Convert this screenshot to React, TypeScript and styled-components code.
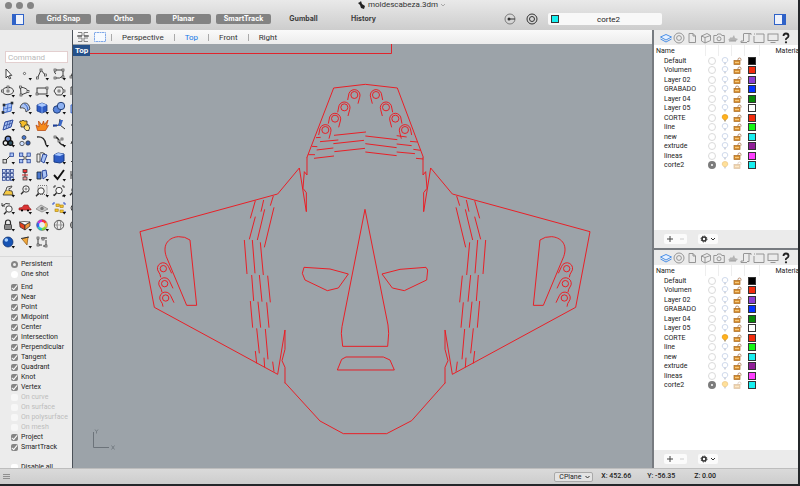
import React from "react";
import styled, { createGlobalStyle } from "styled-components";

const GlobalStyle = createGlobalStyle`
  * { box-sizing: border-box; }
  body { margin: 0; background: #24272a; font-family: Roboto, "Liberation Sans", sans-serif; color: #222; }
  button, input, select { font: inherit; color: inherit; margin: 0; padding: 0; border: 0; }
`;

const Window = styled.div`
  height: 100vh;
  padding: 0 2px 2px 0;
  display: flex;
  flex-direction: column;
  font-size: 7px;
  line-height: 9px;
`;

const Header = styled.header`
  background: linear-gradient(#e9e9e9, #cdcdcd);
  flex: none;
`;

const TitleBar = styled.div`
  display: grid;
  grid-template-columns: 1fr auto 1fr;
  align-items: center;
  height: 10px;
  padding-left: 5px;
`;

const Lights = styled.div`
  display: flex;
  gap: 4px;
`;

const Light = styled.button`
  width: 7px;
  height: 7px;
  border-radius: 50%;
  background: #858585;
`;

const Title = styled.h1`
  margin: 0;
  display: flex;
  align-items: center;
  gap: 3px;
  font-size: 8px;
  line-height: 10px;
  font-weight: 400;
  color: #333;
`;

const Toolbar = styled.div`
  display: flex;
  justify-content: space-between;
  align-items: center;
  height: 20px;
  padding: 0 12px 2px;
`;

const ToolGroup = styled.div`
  display: flex;
  align-items: center;
  gap: 5px;
`;

const SideToggle = styled.button<{ $side: "left" | "right" }>`
  width: 12px;
  height: 11px;
  margin-right: ${(p) => (p.$side === "left" ? 7 : 0)}px;
  border: 1px solid #2f62c8;
  border-${(p) => p.$side}-width: 4px;
  background: #eef2fb;
`;

const Pill = styled.button<{ $on?: boolean }>`
  width: 55px;
  height: 10px;
  border-radius: 2px;
  font-family: Inter, sans-serif;
  font-weight: 700;
  line-height: 10px;
  background: ${(p) => (p.$on ? "#838383" : "transparent")};
  color: ${(p) => (p.$on ? "#fff" : "#3c3c3c")};
`;

const IconButton = styled.button`
  display: grid;
  place-items: center;
  background: none;
  min-width: 0;
`;

const CurrentLayer = styled.button`
  display: grid;
  grid-template-columns: 8px 1fr;
  align-items: center;
  width: 114px;
  height: 12px;
  padding: 0 3px;
  border-radius: 2px;
  background: #f8f8f8;
  font-size: 8px;
`;

const Main = styled.div`
  flex: 1;
  min-height: 0;
  display: grid;
  grid-template-columns: 72px minmax(0, 1fr) 146px;
`;

const Sidebar = styled.aside`
  display: flex;
  flex-direction: column;
  overflow: hidden;
  background: #ececec;
`;

const CommandArea = styled.div`
  padding: 7px 4px 3px 5px;
  margin-top: 14px;
`;

const CommandInput = styled.input`
  display: block;
  width: 100%;
  height: 12px;
  padding: 0 2px;
  border: 1px solid #e3cfcf;
  background: #fff;
  font-size: 8px;
  &::placeholder { color: #b9b9b9; opacity: 1; }
`;

const Palette = styled.div`
  display: grid;
  flex: none;
  grid-template-columns: repeat(5, 1fr);
  grid-template-rows: repeat(11, 1fr);
  width: 84px;
  height: 184px;
  margin-bottom: 6px;
`;

const Snaps = styled.fieldset`
  margin: 0;
  min-width: 0;
  padding: 2px 0 0 11px;
  border: 0;
  border-top: 1px solid #d9d9d9;
`;

const SnapGroup = styled.div<{ $before?: number }>`
  display: flex;
  flex-direction: column;
  margin-top: ${(p) => p.$before ?? 0}px;
`;

const SnapLabel = styled.label<{ $off?: boolean }>`
  display: flex;
  align-items: center;
  gap: 3px;
  height: 10px;
  line-height: 10px;
  white-space: nowrap;
  color: ${(p) => (p.$off ? "#bcbcbc" : "#222")};
`;

const Tick = styled.input`
  appearance: none;
  flex: none;
  width: 7px;
  height: 7px;
  border-radius: ${(p) => (p.type === "radio" ? "50%" : "2px")};
  background: #fff;
  display: grid;
  place-items: center;
  &:checked { background: #858585; }
  &:checked::after {
    content: "";
    width: ${(p) => (p.type === "radio" ? 3 : 2)}px;
    height: ${(p) => (p.type === "radio" ? 3 : 5)}px;
    ${(p) =>
      p.type === "radio"
        ? "border-radius: 50%; background: #eee;"
        : "border: solid #fff; border-width: 0 1px 1px 0; transform: rotate(40deg);"}
  }
  &:disabled { background: #f7f7f7; }
`;

const Stage = styled.main`
  display: flex;
  flex-direction: column;
  min-width: 0;
  border-left: 1px solid #4b5158;
`;

const ViewTabs = styled.nav`
  display: flex;
  align-items: center;
  flex: none;
  height: 14px;
  padding-left: 4px;
  background: linear-gradient(#fafafa, #ececec);
  font-size: 8px;
`;

const ViewIcon = styled(IconButton)`
  width: 12px;
  margin-right: 5px;
`;

const ViewTab = styled.button<{ $active?: boolean }>`
  padding: 0 10px;
  border-left: 1px solid #aaa;
  background: none;
  line-height: 7px;
  color: ${(p) => (p.$active ? "#1578e8" : "#333")};
`;

const Viewport = styled.div`
  position: relative;
  flex: 1;
  min-height: 0;
  background: #9ca3a9;
`;

const Canvas = styled.svg`
  display: block;
  width: 100%;
  height: 100%;
`;

const ViewLabel = styled.div`
  position: absolute;
  top: 1px;
  left: 0;
  padding: 0 2px;
  background: #24508a;
  color: #fff;
  font-size: 8px;
  font-weight: 700;
  line-height: 11px;
`;

const Inspectors = styled.aside`
  display: grid;
  grid-template-rows: 218fr 220fr;
  min-height: 0;
  border-left: 2px solid #777b80;
`;

const Inspector = styled.section`
  display: flex;
  flex-direction: column;
  min-height: 0;
  overflow: hidden;
  background: #fff;
  & + & { border-top: 2px solid #777b80; }
`;

const PanelTabs = styled.div`
  display: grid;
  grid-template-columns: repeat(10, 1fr);
  align-items: center;
  flex: none;
  height: 15px;
  padding: 0 5px;
  background: #ebebeb;
`;

const LayerTable = styled.table`
  table-layout: fixed;
  width: 100%;
  height: 125px;
  border-collapse: collapse;
  td, th { padding: 0; text-align: center; line-height: 8px; }
  td svg { display: block; margin: auto; }
`;

const Heading = styled.th<{ $w?: number }>`
  width: ${(p) => (p.$w ? p.$w + "px" : "auto")};
  height: 11px;
  font-weight: 400;
  white-space: nowrap;
  border-right: 1px solid #eee;
  &&:first-child { text-align: left; padding-left: 2px; }
  &&:last-child { text-align: left; padding-left: 16px; border: 0; overflow: hidden; }
`;

const LayerName = styled.td`
  && { text-align: left; padding-left: 10px; }
`;

const CurrentMark = styled.input`
  appearance: none;
  display: block;
  width: 8px;
  height: 8px;
  margin: 0 auto;
  border: 1px solid #dadada;
  border-radius: 50%;
  &:checked { border: 3px solid #7b7b7b; background: #fff; }
`;

const Swatch = styled.span<{ $color: string }>`
  display: block;
  width: 8px;
  height: 8px;
  margin: 0 auto;
  border: 1px solid #333;
  background: ${(p) => p.$color};
`;

const PanelFooter = styled.div`
  display: flex;
  align-items: center;
  gap: 11px;
  flex: none;
  height: 18px;
  margin-top: auto;
  padding-left: 10px;
  background: #ebebeb;
`;

const Segment = styled.div`
  display: flex;
  border-radius: 2px;
  background: #fbfbfb;
`;

const SegmentButton = styled(IconButton)<{ $w: number }>`
  width: ${(p) => p.$w}px;
  height: 10px;
`;

const StatusBar = styled.footer`
  display: flex;
  align-items: center;
  flex: none;
  height: 16px;
  padding: 0 82px 0 2px;
  border-top: 1px solid #bdbdbd;
  background: linear-gradient(#dadada, #cdcdcd);
  font-weight: 500;
`;

const PlaneSelect = styled.label`
  display: flex;
  align-items: center;
  width: 39px;
  height: 10px;
  margin-left: auto;
  padding-left: 4px;
  border: 1px solid #a9a9a9;
  border-radius: 2px;
  background: #e3e3e3;
  font-weight: 400;
  select { appearance: none; background: none; width: 26px; line-height: 8px; }
`;

const Coordinate = styled.output<{ $gap: number }>`
  margin-left: ${(p) => p.$gap}px;
  white-space: nowrap;
`;

/* ---------- modelling tool icons (16 x 16) ---------- */

const K = "#2c2c2c";
const BLUE = "#3c67c4";
const PALE = "#a9c3f5";
const line = { fill: "none", stroke: K, strokeWidth: 0.9 };
const Node = ({ at, fill = "#eee" }: { at: number[][]; fill?: string }) => (
  <>
    {at.map(([x, y]) => (
      <rect key={x + "-" + y} x={x - 1} y={y - 1} width="2" height="2" fill={fill} stroke={K} strokeWidth=".6" />
    ))}
  </>
);
const Lens = ({ x = 7.5, y = 7 }: { x?: number; y?: number }) => (
  <>
    <circle cx={x} cy={y} r="3.2" fill="#f7f7f7" stroke={K} strokeWidth=".9" />
    <path d={`M${x - 2.5} ${y + 2.5}l-2.500 2.700`} stroke={K} strokeWidth="1.400" />
  </>
);

type Tool = { name: string; art: React.ReactNode; menu?: boolean };
const t = (name: string, art: React.ReactNode, menu = true): Tool => ({ name, art, menu });

const tools: Tool[] = [
  t("Select", <path d="M6 3v9l2-2 1.4 3 1.3-.6L9.300 9.400h2.500z" fill="#fff" stroke={K} strokeWidth=".9" />, false),
  t("Point", <circle cx="7.500" cy="7.500" r="1.100" fill="#fff" stroke="#444" strokeWidth=".8" />),
  t("Polyline", <><path d="M3.500 12L7 4l5 6" {...line} /><Node at={[[3.5, 12], [7, 4], [11.500, 9]]} /></>),
  t("Curve", <><path d="M4 4h8M4 4q-1 4 1 4 M12 5v5q-3 3-8 2" {...line} /><Node at={[[4, 4], [12, 4], [4, 12], [12, 11]]} /></>),
  t("Handle curve", <><path d="M3 12Q3 4 12 4" {...line} /><Node at={[[3, 11]]} /></>),
  t("Ellipse", <><ellipse cx="8" cy="8" rx="5.500" ry="3.700" {...line} /><Node at={[[8, 4], [8, 8], [2.500, 8]]} /></>),
  t("Arc", <><path d="M3.500 4q7 1 8 5L4 12z" {...line} /><Node at={[[3.5, 4], [11, 8.500], [4, 12]]} /></>),
  t("Rectangle", <><rect x="3" y="5" width="10" height="6" {...line} /><Node at={[[3, 11], [13, 5]]} /></>),
  t("Polygon", <><path d="M3 8l2.500-4h5L13 8l-2.500 4h-5z" {...line} /><Node at={[[8, 8], [13, 8]]} /></>),
  t("Text", <path d="M3 4h8M3 4v8" {...line} />),
  t("Surface from corners", <><path d="M4 5l8-2-1 8-8 2z" fill={PALE} stroke={BLUE} /><path d="M8 4L7 12M4 9l8-2" stroke={BLUE} strokeWidth=".8" /><Node at={[[4, 5], [12, 3], [3, 12.500]]} fill="#234" /></>),
  t("Loft", <><path d="M3 8q1-5 5-5 4 0 5 6l-4 3q0-5-6-4z" fill={PALE} stroke={K} strokeWidth=".8" /><path d="M7 3.500q4 2 4 7" stroke={BLUE} fill="none" /></>),
  t("Box", <><path d="M3 5l5-2 5 2v6l-5 2-5-2z" fill="#2d5bc4" stroke="#183b86" strokeWidth=".8" /><path d="M3 5l5 2 5-2-5-2z" fill="#a9c8ff" /><path d="M8 7v6" stroke="#7fa7f0" /></>),
  t("Boolean union", <><circle cx="6" cy="9.500" r="3.700" fill="#5884dc" stroke="#223f78" /><circle cx="10" cy="6" r="3.700" fill="#8eb2f2" stroke="#223f78" /></>),
  t("Mesh", <path d="M3 5l7-1v7l-7 2z" fill={PALE} stroke={BLUE} />),
  t("Plane", <><path d="M5 5l8-2-2 7-8 3z" fill={PALE} stroke="#28459a" /><path d="M4 9l8-3M8 4l-2 8M10.500 3.500L8.500 11" stroke="#28459a" strokeWidth=".7" /></>),
  t("Join", <><path d="M3 4h2q1-2 2 0h3v3q2 1 0 2H8L7 10H4V7Q2 6 3 4z" fill="#f4bd28" stroke={K} strokeWidth=".8" /><path d="M8 8h4v2q2 1 0 2v1.500H9L7 11z" fill="#ffe37b" stroke={K} strokeWidth=".8" /></>, false),
  t("Explode", <path d="M3.500 13.500L2 8l3 2-.5-6L8 8l1.500-4 1 3.500L14 3l-1.500 6 2-.5-3 5z" fill="#f58a1c" stroke="#b2400c" strokeWidth=".7" />, false),
  t("Trim", <><path d="M9 2L8 8l-6 1M9 8l5 4" stroke={K} fill="none" /><path d="M9 3h3l-2 6H7z" fill={BLUE} /><path d="M2 8.500h4" stroke="#1d3f9a" strokeWidth="2" /></>, false),
  t("Split", <path d="M3 8h9M8 4v8" stroke={K} />, false),
  t("Group", <><circle cx="8" cy="6" r="2.800" fill="#6c8bd0" stroke="#111" strokeWidth="1.300" /><circle cx="5.500" cy="10" r="2.300" fill="#eee" stroke="#111" strokeWidth="1.300" /><circle cx="10.500" cy="10" r="2.300" fill="#356" stroke="#111" strokeWidth="1.300" /></>),
  t("Ungroup", <><circle cx="7" cy="4.500" r="2" fill="#4577d0" stroke={K} strokeWidth=".7" /><circle cx="5" cy="10.500" r="2.200" fill="#cfe0ff" stroke={K} strokeWidth=".7" /><circle cx="11" cy="10" r="2.200" fill="#345cae" stroke={K} strokeWidth=".7" /></>, false),
  t("Fillet", <path d="M3 4q8-1 9 8" fill="none" stroke={K} strokeWidth="1.400" />),
  t("Blend", <><path d="M3 4q4 0 5 4t5 4" fill="none" stroke={K} strokeWidth="1.300" /><Node at={[[4, 4], [8, 8], [11, 6]]} /></>),
  t("Extend", <path d="M3 11Q4 5 12 5" {...line} />),
  t("Move", <><path d="M5 11l6-6" {...line} /><rect x="3" y="9.500" width="3.500" height="3.500" fill="#ddd" stroke={K} strokeWidth=".8" /><rect x="10" y="3" width="3.500" height="3.500" fill={PALE} stroke="#28459a" strokeWidth=".8" /></>),
  t("Copy", <><path d="M5 5l6 6M5 11l6-6" stroke={K} strokeWidth=".7" /><Node at={[[8, 8]]} />{[[2.5, 3], [2.5, 9.500], [10, 3], [10, 9.500]].map(([x, y]) => <rect key={x * 20 + y} x={x} y={y} width="3.300" height="3.300" fill={PALE} stroke="#28459a" strokeWidth=".8" />)}</>, false),
  t("Rotate", <><path d="M3 4h3v8H3z" fill="#eee" stroke={K} strokeWidth=".8" /><path d="M9 4l4 1-3 8-3-2z" fill={PALE} stroke="#28459a" /><path d="M6 3q3-1 5 1" {...line} /></>),
  t("Scale", <><path d="M3 5l4-2 6 1v7l-4 2-6-1z" fill="#2d5bc4" stroke="#183b86" /><path d="M3 5l4-2 6 1-4 2z" fill="#a9c8ff" /></>),
  t("Align", <path d="M3 12l8-8M7 4h4v4" {...line} />),
  t("Array", <>{[3, 7, 11].flatMap((x) => [3, 7, 11].map((y) => <rect key={x * 20 + y} x={x - 0.5} y={y - 0.5} width="2.800" height="2.800" fill="#dbe4f8" stroke="#2b4590" strokeWidth=".8" />))}</>),
  t("Mirror", <><path d="M8 5v7" stroke={K} /><rect x="6" y="2.500" width="4" height="3" fill="#e33" stroke={K} strokeWidth=".7" /><rect x="6" y="10" width="4" height="3" fill="#e99" stroke={K} strokeWidth=".7" /><path d="M5 8h6" stroke="#c22" /></>),
  t("Orient", <><path d="M3 5h4v7H3z" fill="#4a78cf" stroke="#123" strokeWidth=".8" /><path d="M8 4l4-1 1 6-4 3z" fill={PALE} stroke="#28459a" /></>),
  t("Check", <path d="M3 8l3.500 4L13 3" fill="none" stroke="#111" strokeWidth="1.900" />),
  t("Dimension", <path d="M3 4v8M3 8h9" {...line} />),
  t("Pan", <><path d="M3 12l3-5 6 1 1 4z" fill="#f5c842" stroke={K} strokeWidth=".8" /><path d="M6 7l1-3 5-1-1 2-2 .5V8" fill="#eee" stroke={K} strokeWidth=".8" /></>),
  t("Zoom dynamic", <><Lens x={9} y={6} /><path d="M9 4.500v3M7.500 6h3" stroke="#555" strokeWidth=".7" /></>, false),
  t("Zoom window", <><rect x="4" y="2.500" width="9" height="9" fill="none" stroke="#777" strokeDasharray="1 1" /><Lens x={7} y={8} /></>),
  t("Zoom extents", <><path d="M3 5V3h2M11 3h2v2M13 11v2h-2M3 11v2" {...line} /><Lens x={8} y={7.500} /></>),
  t("Zoom selected", <Lens x={7} />),
  t("Undo view", <><Lens x={9} y={9} /><path d="M2 6q4-4 8-2M2 3v3h3" {...line} /></>),
  t("Car view", <><path d="M2 10V8l3-.5L7 5h4l1.500 3 1.500 1v1z" fill="#db3434" stroke="#8b1717" strokeWidth=".6" /><circle cx="5" cy="10.500" r="1.100" /><circle cx="11" cy="10.500" r="1.100" /></>),
  t("Hide", <><path d="M2 9l5-4 7 4-6 3z" fill="#c9c9c9" stroke="#888" strokeWidth=".8" /><circle cx="8" cy="8.500" r="1.700" fill="#777" /></>),
  t("Select points", <><path d="M2 5V3h2M12 3h2v2M14 11v2" stroke="#35c" fill="none" />{[[5, 4], [9, 5], [4, 9], [9, 10]].map(([x, y]) => <rect key={x * 20 + y} x={x} y={y} width="3.200" height="2.600" fill="#f6c52e" stroke="#a57b12" strokeWidth=".6" />)}</>),
  t("Measure", <circle cx="6" cy="8" r="3" {...line} />),
  t("Lock", <><path d="M5.500 8V5.500q0-2.500 2.500-2.500t2.500 2.500V8" {...line} strokeWidth={1.2} /><rect x="4.500" y="7.500" width="7" height="5" rx=".8" fill="#8a8a8a" stroke={K} strokeWidth=".8" /></>),
  t("Layers", <><path d="M2.500 5L8 8v5L3 10z" fill="#e5401c" stroke={K} strokeWidth=".7" /><path d="M8 8l5-3v4l-5 4z" fill="#f29a3c" stroke={K} strokeWidth=".7" /><path d="M2.500 5L7 4.500 13 5 8 8z" fill="#fff" stroke={K} strokeWidth=".7" /></>),
  t("Colours", <>{["#f33", "#fb3", "#8d3", "#2cc", "#36e", "#c3d"].map((c, i) => <path key={c} d="M8 3.800a4.200 4.200 0 0 1 3.640 2.100" fill="none" stroke={c} strokeWidth="2.600" transform={`rotate(${i * 60} 8 8)`} />)}<circle cx="8" cy="8" r="5.500" fill="none" stroke="#444" strokeWidth=".4" /></>),
  t("Globe", <><circle cx="8" cy="8" r="4.700" fill="#eee" stroke="#555" /><ellipse cx="8" cy="8" rx="2" ry="4.700" fill="none" stroke="#666" strokeWidth=".8" /><path d="M3.500 8h9" stroke="#888" strokeWidth=".7" /></>, false),
  t("Sphere", <circle cx="7" cy="8" r="4.500" fill="#aaa" stroke="#555" />),
  t("Render", <><circle cx="8" cy="8" r="5" fill="#1653b4" stroke="#0b2b66" strokeWidth=".7" /><circle cx="6.300" cy="6" r="1.800" fill="#a6d0ff" /></>),
  t("Spotlight", <><path d="M5 5l6-2-1 8z" fill="#f2a83a" stroke="#8b5413" strokeWidth=".7" /><path d="M4 4.500L12 3" stroke="#333" /></>),
  t("Relocate", <><path d="M4 4v7h4M7 4h6M12 6v6H9" {...line} /><Node at={[[4, 4], [4, 11], [12, 12], [9, 5]]} /></>, false),
];

const ToolIcon = ({ tool }: { tool: Tool }) => (
  <IconButton title={tool.name} aria-label={tool.name}>
    <svg width="16" height="16" viewBox="0 0 16 16">
      {tool.art}
      {tool.menu && <path d="M11.500 12h3.500l-1.700 2.500z" fill="#111" />}
    </svg>
  </IconButton>
);

/* ---------- inspector icons (12 x 12) ---------- */

const grey = { fill: "none", stroke: "#8c8c8c", strokeWidth: 0.9 };
const panelIcons: [string, React.ReactNode][] = [
  ["Layers", <><path d="M.5 5L6 2.500 11.500 5 6 8z" fill="#e5f0ff" stroke="#4a8fe6" /><path d="M.5 7L6 10l5.500-3" fill="none" stroke="#4a8fe6" /></>],
  ["Properties", <><circle cx="6" cy="6" r="5" {...grey} /><circle cx="6" cy="6" r="2.400" {...grey} /></>],
  ["Notes", <path d="M3 1.500h4l2.500 2.500v6.500H3zM7 1.500V4h2.500" {...grey} />],
  ["Blocks", <path d="M1.500 4L7 1.500l3.500 2v5L5 11 1.500 9zM1.500 4L5 5.500 10.500 3.500M5 5.500V11" {...grey} />],
  ["Named views", <><path d="M.8 3.500h3l1-1.500h3l1 1.500h2.500v7H.8z" {...grey} /><circle cx="6" cy="6.800" r="2" {...grey} /></>],
  ["Sun", <><path d="M1 8l3-3 1 1 2-3 1 3 3 1-2 2H4z" fill="#b5b5b5" /><path d="M2 9h7" stroke="#999" /></>],
  ["History", <path d="M3.500 1.500H11V3M9 2v7.500H7M3.500 2v7H1v1.500h6" {...grey} />],
  ["Selection", <path d="M1 2h1M3 2h8v8.500H1V4" {...grey} />],
  ["Display", <><rect x="1" y="2" width="10" height="6.500" {...grey} /><path d="M3.500 10.500h5" {...grey} /></>],
];

const Bulb = ({ state }: { state: "off" | "on" | "dim" }) => {
  const fill = { off: "#fff", on: "#ffb21c", dim: "#ffe09a" }[state];
  const stroke = { off: "#c3cfe6", on: "#e89a18", dim: "#edc98a" }[state];
  return (
    <svg width="8" height="8" viewBox="0 0 8 8">
      <path d="M2.800 5.500Q1.200 4.500 1.200 3a2.800 2.500 0 0 1 5.600 0q0 1.500-1.600 2.500z" fill={fill} stroke={stroke} strokeWidth=".8" />
      <path d="M3 6.800h2" stroke={state === "on" ? "#9a8352" : "#c4c6cc"} />
    </svg>
  );
};

const Padlock = ({ state }: { state: "open" | "closed" | "dim" }) => (
  <svg width="9" height="8" viewBox="0 0 9 8" opacity={state === "dim" ? 0.4 : 1}>
    <path d={state === "closed" ? "M2.500 4V2.500q0-1.500 1.700-1.500t1.700 1.500V4" : "M5 4V2.500Q5 1 6.500 1T8 2.500V3.500"} fill="none" stroke="#b58b6c" />
    <rect x="1" y="3.500" width="6" height="4" fill="#d99235" stroke="#a8691f" strokeWidth=".7" />
    <path d="M2 5.500h4" stroke="#f6c97a" />
  </svg>
);

type Layer = { name: string; color: string; bulb?: "on" | "dim"; lock?: "closed" | "dim"; current?: boolean };
const layers: Layer[] = [
  { name: "Default", color: "#000" },
  { name: "Volumen", color: "#f32b0c" },
  { name: "Layer 02", color: "#8b3fd1" },
  { name: "GRABADO", color: "#0433ff", lock: "closed" },
  { name: "Layer 04", color: "#0a8a0a" },
  { name: "Layer 05", color: "#fff" },
  { name: "CORTE", color: "#f32b0c", bulb: "on" },
  { name: "line", color: "#14f514" },
  { name: "new", color: "#17eff0" },
  { name: "extrude", color: "#911f98" },
  { name: "lineas", color: "#ff40ff" },
  { name: "corte2", color: "#17eff0", bulb: "dim", lock: "dim", current: true },
];

const LayerInspector = ({ id }: { id: string }) => (
  <Inspector>
    <PanelTabs>
      {panelIcons.map(([name, art]) => (
        <IconButton key={name} aria-label={name}>
          <svg width="12" height="12" viewBox="0 0 12 12">{art}</svg>
        </IconButton>
      ))}
      <IconButton aria-label="Help">
        <svg width="12" height="12" viewBox="0 0 12 12">
          <path d="M3.500 4Q3.500 1.500 6 1.500T8.500 4Q8.500 5.200 7 6T6 8" fill="none" stroke="#222" strokeWidth="1.800" />
          <circle cx="6" cy="10.300" r="1.100" fill="#222" />
        </svg>
      </IconButton>
    </PanelTabs>
    <LayerTable>
      <thead>
        <tr>
          <Heading $w={51}>Name</Heading>
          <Heading $w={13} aria-label="Current" />
          <Heading $w={13} aria-label="Visible" />
          <Heading $w={13} aria-label="Locked" />
          <Heading $w={15} aria-label="Colour" />
          <Heading>Material</Heading>
        </tr>
      </thead>
      <tbody>
        {layers.map((l) => (
          <tr key={l.name}>
            <LayerName>{l.name}</LayerName>
            <td><CurrentMark type="radio" name={id} aria-label={l.name} defaultChecked={l.current} /></td>
            <td><Bulb state={l.bulb ?? "off"} /></td>
            <td><Padlock state={l.lock ?? "open"} /></td>
            <td><Swatch $color={l.color} /></td>
            <td />
          </tr>
        ))}
      </tbody>
    </LayerTable>
    <PanelFooter>
      <Segment>
        <SegmentButton $w={12} aria-label="Add layer">
          <svg width="8" height="8" viewBox="0 0 8 8"><path d="M1 4h6M4 1v6" stroke="#444" /></svg>
        </SegmentButton>
        <SegmentButton $w={11} aria-label="Remove layer">
          <svg width="8" height="8" viewBox="0 0 8 8"><path d="M2 4h4" stroke="#ccc" /></svg>
        </SegmentButton>
      </Segment>
      <Segment>
        <SegmentButton $w={20} aria-label="Layer actions">
          <svg width="16" height="8" viewBox="0 0 16 8">
            <circle cx="4" cy="4" r="2" fill="none" stroke="#333" strokeWidth="1.600" />
            <circle cx="4" cy="4" r="3" fill="none" stroke="#333" strokeDasharray="1.200 1.150" />
            <path d="M11 3l2 2 2-2" fill="none" stroke="#333" />
          </svg>
        </SegmentButton>
      </Segment>
    </PanelFooter>
  </Inspector>
);

/* ---------- mask drawing ---------- */

const WING = [
  "M531 -9V45L523 35L519 85L529 98V155L508 24L443 102L30 215L73 442L443 643L465 510V568L456 602L465 622V670",
  "M180 240L200 436H170L109 290C95 250 120 232 145 230Q165 229 180 240",
  "M376 122L361 175M401 120L393 155M430 108L421 137M376 170L358 238M404 148L382 240M432 142L403 262",
  "M343 240L351 342M367 240L375 340M391 247L400 345M365 345L371 423M388 345L396 425M413 347L421 427",
  "M361 423L368 503M384 425L392 503M410 427L417 503M380 505L388 580M406 507L414 598",
  "M376 573L380 610M402 593L404 622M428 605L432 635",
].join("");

const Wing = () => (
  <>
    <path d={WING} />
    {[[100, 326], [104, 371], [107, 414]].map(([x, y]) => (
      <g key={y} transform={`translate(${x} ${y})`}>
        <circle r="9.500" />
        <path d="M-8 26Q-9 16 -14 10A17 17 0 1 1 15 -7L25 14" />
      </g>
    ))}
  </>
);

const headStripes =
  "M132 196L228 186M90 215L145 210M130 221L222 211M80 240L130 234M133 245L225 235M72 265L132 258" +
  "M78 203L92 202M66 229L82 230M55 254L75 254M226 198L322 209M226 221L320 233M226 246L320 257" +
  "M320 197L350 201M320 222L365 227M320 246L375 251M360 214L382 216M370 238L392 241M378 265L400 267";

const Mask = () => (
  <Canvas viewBox="73 44 579 424" preserveAspectRatio="xMidYMid meet" role="img" aria-label="Mask pattern, top view">
    <g fill="none" stroke="#ee161d" strokeWidth="2.800">
      <path d="M73 53.500H391.500V44" strokeWidth="1" stroke="#e0242c" />
      <g transform="translate(130 160) scale(.33333)"><Wing /></g>
      <g transform="translate(600 160) scale(-.33333 .33333)"><Wing /></g>
      <g transform="translate(290 70) scale(.33333)">
        <path d="M51 262L131 54L226 43L322 54L400 262" />
        <path d={headStripes} />
        {[[193, 75], [163, 112], [135, 146], [106, 180]].map(([x, y]) => (
          <React.Fragment key={x}>
            {[`translate(${x} ${y})`, `translate(${451 - x} ${y}) scale(-1 1)`].map((tr) => (
              <g key={tr} transform={tr}>
                <circle r="10.500" />
                <path d="M-20 15L-16 -5A17 17 0 1 1 16 7L11 26" />
              </g>
            ))}
          </React.Fragment>
        ))}
      </g>
      <g transform="translate(260 190) scale(.33333)">
        <path d="M315 58L246 410L244 430L248 469H383L386 430L384 405Z" />
        <path d="M132 232L210 237L265 252L235 294L202 302L135 270L127 250Z" />
        <path d="M366 252L420 238L498 232L503 240L500 270L433 302L397 294Z" />
        <path d="M232 540L245 508L258 501H370L390 510L403 540Z" />
        <path d="M75 578L180 693L250 731H380L455 692L556 578" />
      </g>
    </g>
    <g fill="none" stroke="#6c737a">
      <path d="M93.500 432V447.500H109" />
      <path d="M111.500 445.500l3 4m0-4l-3 4M95 429.500l1.500 2 1.500-2m-1.500 2v2" strokeWidth=".8" />
    </g>
  </Canvas>
);

const osnaps = ["End", "Near", "Point", "Midpoint", "Center", "Intersection", "Perpendicular", "Tangent", "Quadrant", "Knot", "Vertex"];
const offSnaps = ["On curve", "On surface", "On polysurface", "On mesh"];

const Check = ({ name, on, off }: { name: string; on?: boolean; off?: boolean }) => (
  <SnapLabel $off={off}>
    <Tick type="checkbox" defaultChecked={on} disabled={off} />
    {name}
  </SnapLabel>
);

export default function App() {
  return (
    <Window>
      <GlobalStyle />
      <Header>
        <TitleBar>
          <Lights>
            <Light aria-label="Close" />
            <Light aria-label="Minimise" />
            <Light aria-label="Zoom" />
          </Lights>
          <Title>
            <svg width="7" height="8" viewBox="0 0 7 8"><path d="M0 2l2-1 1-1 1 3 3 2-1 3-3-1-1-3z" fill="#222" /></svg>
            moldescabeza.3dm
            <svg width="4" height="4" viewBox="0 0 4 4"><path d="M0 1l2 2 2-2" fill="none" stroke="#999" strokeWidth=".8" /></svg>
          </Title>
        </TitleBar>
        <Toolbar>
          <ToolGroup>
            <SideToggle $side="left" aria-label="Left sidebar" />
            <Pill $on>Grid Snap</Pill>
            <Pill $on>Ortho</Pill>
            <Pill $on>Planar</Pill>
            <Pill $on>SmartTrack</Pill>
            <Pill>Gumball</Pill>
            <Pill>History</Pill>
          </ToolGroup>
          <ToolGroup>
            <IconButton aria-label="Filter">
              <svg width="12" height="12" viewBox="0 0 12 12">
                <circle cx="6" cy="6" r="5" fill="none" stroke="#666" strokeWidth=".8" />
                <circle cx="5" cy="6" r="1.500" fill="#333" /><path d="M5 6h6" stroke="#333" />
              </svg>
            </IconButton>
            <IconButton aria-label="Properties">
              <svg width="22" height="12" viewBox="0 0 22 12">
                <circle cx="11" cy="6" r="5" fill="none" stroke="#333" />
                <circle cx="11" cy="6" r="2.500" fill="none" stroke="#333" />
              </svg>
            </IconButton>
            <CurrentLayer><Swatch $color="#17eff0" />corte2</CurrentLayer>
          </ToolGroup>
          <SideToggle $side="right" aria-label="Right sidebar" />
        </Toolbar>
      </Header>
      <Main>
        <Sidebar>
          <CommandArea><CommandInput placeholder="Command" aria-label="Command" /></CommandArea>
          <Palette>{tools.map((tool) => <ToolIcon key={tool.name} tool={tool} />)}</Palette>
          <Snaps aria-label="Object snaps">
            <SnapGroup>
              <SnapLabel><Tick type="radio" name="mode" defaultChecked />Persistent</SnapLabel>
              <SnapLabel><Tick type="radio" name="mode" />One shot</SnapLabel>
            </SnapGroup>
            <SnapGroup $before={3}>
              {osnaps.map((n) => <Check key={n} name={n} on />)}
              {offSnaps.map((n) => <Check key={n} name={n} off />)}
              <Check name="Project" on />
              <Check name="SmartTrack" on />
            </SnapGroup>
            <SnapGroup $before={10}><Check name="Disable all" /></SnapGroup>
          </Snaps>
        </Sidebar>
        <Stage>
          <ViewTabs>
            <ViewIcon aria-label="Four views">
              <svg width="12" height="10" viewBox="0 0 12 10">
                <path d="M1 .5h4v3.500H1M11 .5H7v3.500h4M1 9.500h4V6H1M11 9.500H7V6h4" fill="none" stroke="#777" strokeWidth=".9" />
                <path d="M0 4h5M7 4h5" stroke="#444" />
              </svg>
            </ViewIcon>
            <ViewIcon aria-label="Single view">
              <svg width="12" height="10" viewBox="0 0 12 10"><rect x=".5" y=".5" width="11" height="9" fill="#f6faff" stroke="#7fa8e8" strokeDasharray="2 .5" /></svg>
            </ViewIcon>
            <ViewTab>Perspective</ViewTab>
            <ViewTab $active>Top</ViewTab>
            <ViewTab>Front</ViewTab>
            <ViewTab>Right</ViewTab>
          </ViewTabs>
          <Viewport>
            <Mask />
            <ViewLabel>Top</ViewLabel>
          </Viewport>
        </Stage>
        <Inspectors>
          <LayerInspector id="upper" />
          <LayerInspector id="lower" />
        </Inspectors>
      </Main>
      <StatusBar>
        <IconButton aria-label="Menu">
          <svg width="9" height="8" viewBox="0 0 9 8"><path d="M1 1.500h7M1 3.500h7M1 5.500h7" stroke="#888" strokeWidth=".9" /></svg>
        </IconButton>
        <PlaneSelect>
          <select aria-label="Coordinate system" defaultValue="CPlane"><option>CPlane</option></select>
          <svg width="5" height="4" viewBox="0 0 5 4"><path d="M.5 1l2 2 2-2" fill="none" stroke="#333" /></svg>
        </PlaneSelect>
        <Coordinate $gap={8}>X: 452.66</Coordinate>
        <Coordinate $gap={16}>Y: -56.35</Coordinate>
        <Coordinate $gap={19}>Z: 0.00</Coordinate>
      </StatusBar>
    </Window>
  );
}
